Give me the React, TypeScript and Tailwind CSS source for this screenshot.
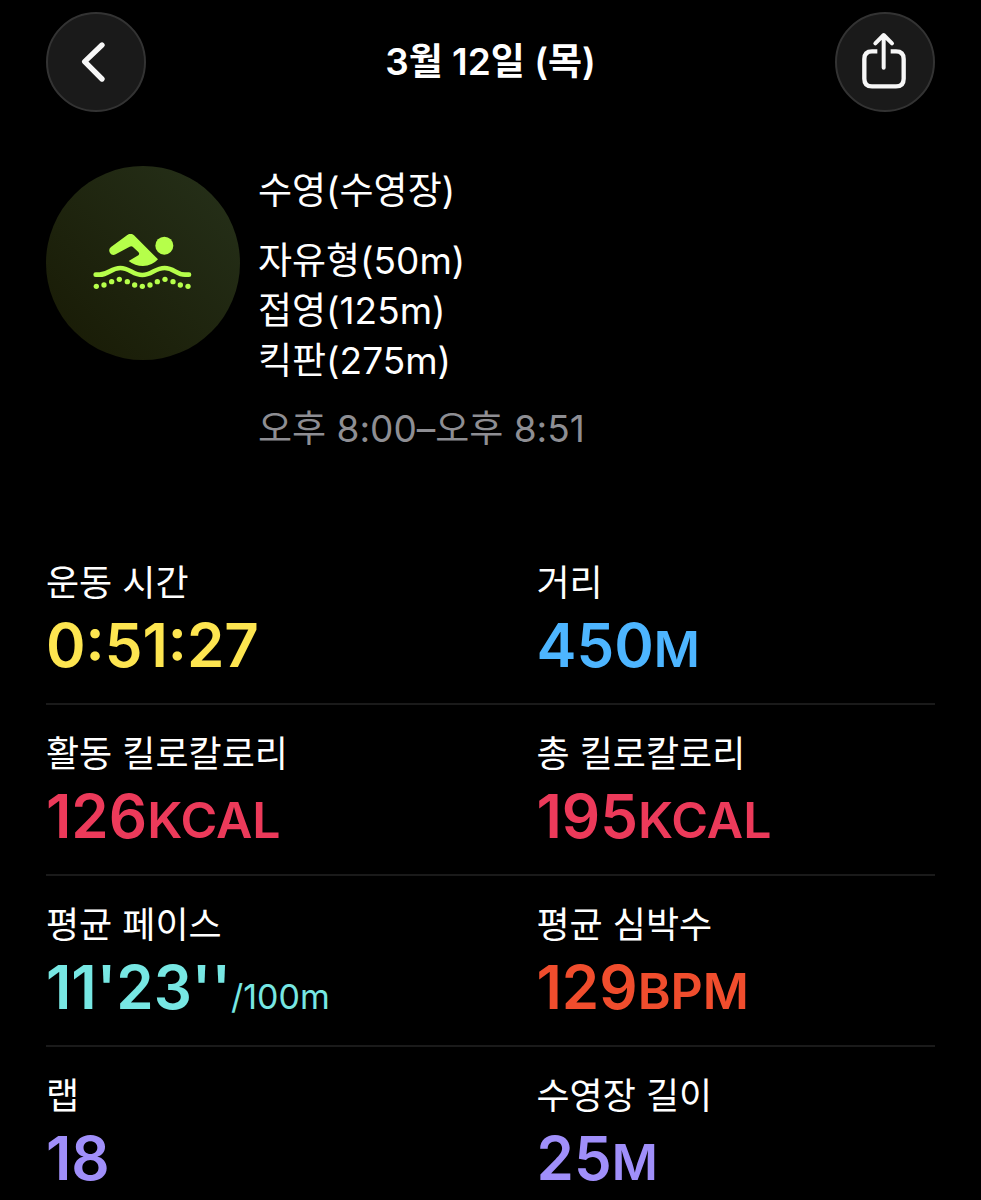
import clsx from "clsx";

type Stat = {
  label: string;
  value: string;
  unit?: string;
  per?: string;
  color: string;
};

const strokes = ["자유형(50m)", "접영(125m)", "킥판(275m)"];

const rows: Stat[][] = [
  [
    { label: "운동 시간", value: "0:51:27", color: "text-[#fde550]" },
    { label: "거리", value: "450", unit: "M", color: "text-[#4db5ff]" },
  ],
  [
    { label: "활동 킬로칼로리", value: "126", unit: "KCAL", color: "text-[#ec3a5a]" },
    { label: "총 킬로칼로리", value: "195", unit: "KCAL", color: "text-[#ec3a5a]" },
  ],
  [
    { label: "평균 페이스", value: "11'23''", per: "/100m", color: "text-[#77e7e3]" },
    { label: "평균 심박수", value: "129", unit: "BPM", color: "text-[#f04d2d]" },
  ],
  [
    { label: "랩", value: "18", color: "text-[#a08ffa]" },
    { label: "수영장 길이", value: "25", unit: "M", color: "text-[#a08ffa]" },
  ],
];

const waveDots = [
  [168, 380],
  [191, 376],
  [214, 366],
  [237, 359],
  [261, 366],
  [283, 376],
  [306, 380],
  [329, 376],
  [351, 366],
  [374, 359],
  [398, 366],
  [420, 376],
  [443, 380],
];

const roundButton =
  "size-[100px] shrink-0 rounded-full border-2 border-[#333333] bg-[#1a1a1a] text-[#f7f7f7]";

function SwimIcon() {
  return (
    <svg viewBox="158 223 300 174" className="w-[100px] text-[#b6ff4a]" aria-hidden="true">
      <path
        fill="currentColor"
        d="M212 262 L261 226 Q271 218 281 227 L353 299 Q336 318 308 319 Q284 319 265 304 L294 287 Q299 283 294 277 L277 261 Q273 258 268 261 L226 284 Q215 289 209 280 Q203 269 212 262 Z"
      />
      <circle cx="372" cy="258" r="27" fill="currentColor" />
      <path
        fill="none"
        stroke="currentColor"
        strokeWidth="14"
        strokeLinecap="round"
        d="M166 345 H178 C205 345 212 325 240 325 C268 325 278 346 306 346 C334 346 344 325 373 325 C401 325 408 345 434 345 H446"
      />
      {waveDots.map(([x, y]) => (
        <circle key={x} cx={x} cy={y} r="8" fill="currentColor" />
      ))}
    </svg>
  );
}

function Header() {
  return (
    <header className="flex items-center justify-between">
      <button type="button" aria-label="뒤로" className={roundButton}>
        <svg viewBox="54 41 288 288" className="size-full" fill="none" stroke="currentColor">
          <path
            d="M216 134 L164 184 L216 236"
            strokeWidth="16"
            strokeLinecap="round"
            strokeLinejoin="round"
          />
        </svg>
      </button>
      <h1 className="text-[37px] leading-[50px] font-semibold">3월 12일 (목)</h1>
      <button type="button" aria-label="공유" className={roundButton}>
        <svg viewBox="52 41 288 288" className="size-full" fill="none" stroke="currentColor">
          <path
            d="M173 153 H157 Q134 153 134 176 V235 Q134 258 157 258 H229 Q252 258 252 235 V176 Q252 153 229 153 H213"
            strokeWidth="13"
          />
          <path
            d="M192 202 V105 M167 129 L192 104 L217 129"
            strokeWidth="12"
            strokeLinecap="round"
            strokeLinejoin="round"
          />
        </svg>
      </button>
    </header>
  );
}

function WorkoutSummary() {
  return (
    <section className="mt-[54px] flex gap-[18px] text-[37px] leading-[50px]">
      <div className="flex size-[194px] shrink-0 items-center justify-center rounded-full bg-linear-to-tr from-[#181a05] to-[#26311a]">
        <SwimIcon />
      </div>
      <div>
        <h2>수영(수영장)</h2>
        <ul className="mt-5">
          {strokes.map((stroke) => (
            <li key={stroke}>{stroke}</li>
          ))}
        </ul>
        <p className="mt-[18px] text-[#8e8e93]">오후 8:00–오후 8:51</p>
      </div>
    </section>
  );
}

function StatItem({ label, value, unit, per, color }: Stat) {
  return (
    <div>
      <dt className="text-[36px] leading-[48px]">{label}</dt>
      <dd className={clsx("text-[60px] leading-[76px] font-semibold", color)}>
        {value}
        {unit && <span className="text-[50px] leading-none">{unit}</span>}
        {per && <span className="text-[34px] leading-none font-normal">{per}</span>}
      </dd>
    </div>
  );
}

export default function App() {
  return (
    <div className="min-h-screen bg-black font-['Inter','Noto_Sans_CJK_KR',sans-serif] text-white">
      <main className="px-[46px] pt-3">
        <Header />
        <WorkoutSummary />
        <div className="mt-20">
          {rows.map((row) => (
            <dl
              key={row[0].label}
              className="grid grid-cols-2 gap-x-[92px] border-b-2 border-[#1a1a1a] pt-[25px] pb-5 last:border-b-0 last:pb-0"
            >
              {row.map((stat) => (
                <StatItem key={stat.label} {...stat} />
              ))}
            </dl>
          ))}
        </div>
      </main>
    </div>
  );
}
